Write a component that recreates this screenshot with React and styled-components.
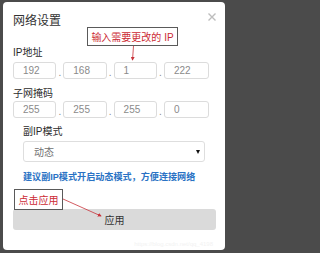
import styled, { createGlobalStyle } from "styled-components";

const GlobalStyle = createGlobalStyle`
  html, body {
    margin: 0;
    padding: 0;
    background: #4b4b4b;
  }
  body {
    width: 230px;
    height: 253px;
    overflow: hidden;
    font-family: "Liberation Sans", "Noto Sans CJK SC", sans-serif;
  }
`;

const ipList = ["192", "168", "1", "222"];
const maskList = ["255", "255", "255", "0"];

export default function App() {
  return (
    <>
      <GlobalStyle />
      <Panel>
        <Header>
          <Title>网络设置</Title>
          <Close>
            <svg width="8" height="8" viewBox="0 0 8 8">
              <path d="M0.5 0.5 L7.5 7.5 M7.5 0.5 L0.5 7.5" stroke="#bdbdbd" strokeWidth="1.4" />
            </svg>
          </Close>
        </Header>

        <Label $top={16}>IP地址</Label>
        <IpRow $top={3}>
          {ipList.map((v, i) => (
            <IpGroup key={i} $last={i === ipList.length - 1}>
              <IpBox>{v}</IpBox>
              {i < ipList.length - 1 && <Dot>.</Dot>}
            </IpGroup>
          ))}
        </IpRow>

        <Label $top={9}>子网掩码</Label>
        <IpRow $top={1}>
          {maskList.map((v, i) => (
            <IpGroup key={i} $last={i === maskList.length - 1}>
              <IpBox>{v}</IpBox>
              {i < maskList.length - 1 && <Dot>.</Dot>}
            </IpGroup>
          ))}
        </IpRow>

        <SubSection>
          <Label $top={8}>副IP模式</Label>
          <Select>
            <span>动态</span>
            <Caret />
          </Select>
          <Hint>建议副IP模式开启动态模式，方便连接网络</Hint>
        </SubSection>

        <ApplyButton>应用</ApplyButton>

        <Watermark>https://blog.csdn.net/qq_4198</Watermark>

        <Note $left={84} $top={25} $w={91} $h={19}>输入需要更改的 IP</Note>
        <Note $left={11} $top={187} $w={49} $h={21}>点击应用</Note>

        <Arrows viewBox="0 0 222 248" width="222" height="248">
          <defs>
            <marker id="head" markerWidth="5" markerHeight="5" refX="4" refY="2.5" orient="auto">
              <path d="M0 0 L5 2.5 L0 5 z" fill="#c8323a" />
            </marker>
          </defs>
          <line x1="130.5" y1="44" x2="129.5" y2="58" stroke="#c8323a" strokeWidth="0.8" markerEnd="url(#head)" />
          <line x1="60" y1="197" x2="98" y2="214" stroke="#c8323a" strokeWidth="0.8" markerEnd="url(#head)" />
        </Arrows>
      </Panel>
    </>
  );
}

const Panel = styled.div`
  position: relative;
  box-sizing: border-box;
  width: 222px;
  height: 248px;
  margin: 2px 5px 3px 3px;
  padding: 9px 9px 0 10px;
  background: #ffffff;
  border-radius: 4px;
`;

const Header = styled.div`
  display: flex;
  justify-content: space-between;
  align-items: flex-start;
  height: 20px;
`;

const Title = styled.div`
  font-size: 12px;
  line-height: 20px;
  color: #333;
`;

const Close = styled.div`
  display: flex;
  margin-top: 2px;
`;

const Label = styled.div`
  margin-top: ${(p) => p.$top}px;
  font-size: 10px;
  line-height: 12px;
  color: #2b2b2b;
`;

const IpRow = styled.div`
  display: flex;
  width: 196px;
  margin-top: ${(p) => p.$top}px;
`;

const IpGroup = styled.div`
  display: flex;
  flex: ${(p) => (p.$last ? "0 0 45px" : "0 0 50.3px")};
`;

const IpBox = styled.div`
  box-sizing: border-box;
  width: 43px;
  height: 17px;
  padding-left: 9px;
  border: 1px solid #dcdcdc;
  border-radius: 3px;
  font-size: 10px;
  line-height: 15px;
  color: #8a8a8a;
  flex: 1;
`;

const Dot = styled.span`
  width: 7px;
  text-align: center;
  align-self: flex-end;
  font-size: 10px;
  line-height: 12px;
  color: #888;
`;

const SubSection = styled.div`
  padding-left: 10px;
  display: flex;
  flex-direction: column;
`;

const Select = styled.div`
  box-sizing: border-box;
  display: flex;
  align-items: center;
  justify-content: space-between;
  width: 182px;
  height: 21px;
  margin-top: 3px;
  padding: 0 4px 0 10px;
  border: 1px solid #dedede;
  border-radius: 3px;
  font-size: 10px;
  color: #707070;
`;

const Caret = styled.span`
  width: 0;
  height: 0;
  border-left: 2.5px solid transparent;
  border-right: 2.5px solid transparent;
  border-top: 4px solid #111;
`;

const Hint = styled.div`
  margin-top: 9px;
  font-size: 9.1px;
  line-height: 12px;
  font-weight: bold;
  color: #2a72c4;
  white-space: nowrap;
`;

const ApplyButton = styled.div`
  margin-top: 26px;
  height: 21px;
  border-radius: 3px;
  background: #dadada;
  display: flex;
  align-items: center;
  justify-content: center;
  font-size: 10px;
  color: #333;
`;

const Watermark = styled.div`
  position: absolute;
  right: 12px;
  bottom: 3px;
  font-size: 6px;
  color: #f2f2f2;
`;

const Note = styled.div`
  position: absolute;
  left: ${(p) => p.$left}px;
  top: ${(p) => p.$top}px;
  box-sizing: border-box;
  width: ${(p) => p.$w}px;
  height: ${(p) => p.$h}px;
  border: 1px solid #5a5a5a;
  background: #fff;
  display: flex;
  align-items: center;
  justify-content: center;
  font-size: 10px;
  color: #cc2a33;
  white-space: nowrap;
`;

const Arrows = styled.svg`
  position: absolute;
  left: 0;
  top: 0;
  pointer-events: none;
`;
